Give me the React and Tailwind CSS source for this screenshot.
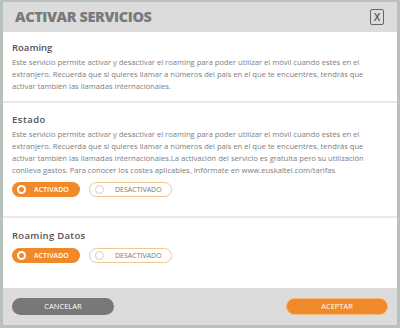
import React from "react";

function Toggle() {
  return (
    <div className="flex gap-[9px] items-center">
      <div className="w-[68px] h-[15px] rounded-full bg-[#f0892a] flex items-center pl-[5px] gap-[8px]">
        <div className="w-[9px] h-[9px] rounded-full border-[2px] border-white bg-[#f0892a]"></div>
        <span className="text-[7px] font-semibold text-white leading-none">ACTIVADO</span>
      </div>
      <div className="w-[83px] h-[15px] rounded-full border border-[#f3c58f] bg-white flex items-center pl-[5px] gap-[11px]">
        <div className="w-[9px] h-[9px] rounded-full border border-[#cfcfcf] bg-white"></div>
        <span className="text-[7px] text-[#777] leading-none">DESACTIVADO</span>
      </div>
    </div>
  );
}

export default function App() {
  return (
    <div className="w-[400px] h-[328px] bg-[#b9c1bd] pt-[2px] px-[3px] pb-[3px]" style={{ fontFamily: '"Open Sans", sans-serif' }}>
      <div className="w-full h-full flex flex-col bg-white">
        <div className="h-[30px] bg-[#dcdcdc] flex items-center justify-between pl-[12px] pr-[13px] shrink-0">
          <span className="text-[14.5px] font-extrabold text-[#7a7a7a] tracking-[-0.4px]">ACTIVAR SERVICIOS</span>
          <div className="w-[14px] h-[16px] border-[1.5px] border-[#666] rounded-[2px] flex items-center justify-center text-[10px] font-semibold text-[#555] leading-none">X</div>
        </div>
        <div className="h-[69px] px-[9px] pt-[10px] shrink-0">
          <div className="text-[9.5px] font-semibold text-[#555] leading-[12px] mb-[2px]">Roaming</div>
          <p className="text-[7.6px] text-[#7d7d7d] leading-[12px]">Este servicio permite activar y desactivar el roaming para poder utilizar el móvil cuando estés en el extranjero. Recuerda que si quieres llamar a números del país en el que te encuentres, tendrás que activar también las llamadas internacionales.</p>
        </div>
        <div className="h-[2px] bg-[#e9e9e9] shrink-0"></div>
        <div className="h-[113px] px-[9px] pt-[11px] shrink-0">
          <div className="text-[9.5px] font-semibold text-[#555] leading-[12px] mb-[2px] tracking-[0.5px]">Estado</div>
          <p className="text-[7.6px] text-[#7d7d7d] leading-[12px]">Este servicio permite activar y desactivar el roaming para poder utilizar el móvil cuando estés en el extranjero. Recuerda que si quieres llamar a números del país en el que te encuentres, tendrás que activar también las llamadas internacionales.La activación del servicio es gratuita pero su utilización conlleva gastos. Para conocer los costes aplicables, infórmate en www.euskaltel.com/tarifas</p>
          <div className="mt-[6px]"><Toggle /></div>
        </div>
        <div className="h-[2px] bg-[#e9e9e9] shrink-0"></div>
        <div className="flex-1 px-[9px] pt-[12px]">
          <div className="text-[9.5px] font-semibold text-[#555] leading-[12px] mb-[6px] tracking-[0.3px]">Roaming Datos</div>
          <Toggle />
        </div>
        <div className="h-[37px] bg-[#dcdcdc] flex items-center justify-between px-[9px] shrink-0">
          <div className="w-[102px] h-[17px] rounded-full bg-[#787878] flex items-center justify-center text-[7.5px] text-white">CANCELAR</div>
          <div className="w-[102px] h-[17px] rounded-full bg-[#f0892a] border border-[#f6b878] flex items-center justify-center text-[7.5px] text-white">ACEPTAR</div>
        </div>
      </div>
    </div>
  );
}
